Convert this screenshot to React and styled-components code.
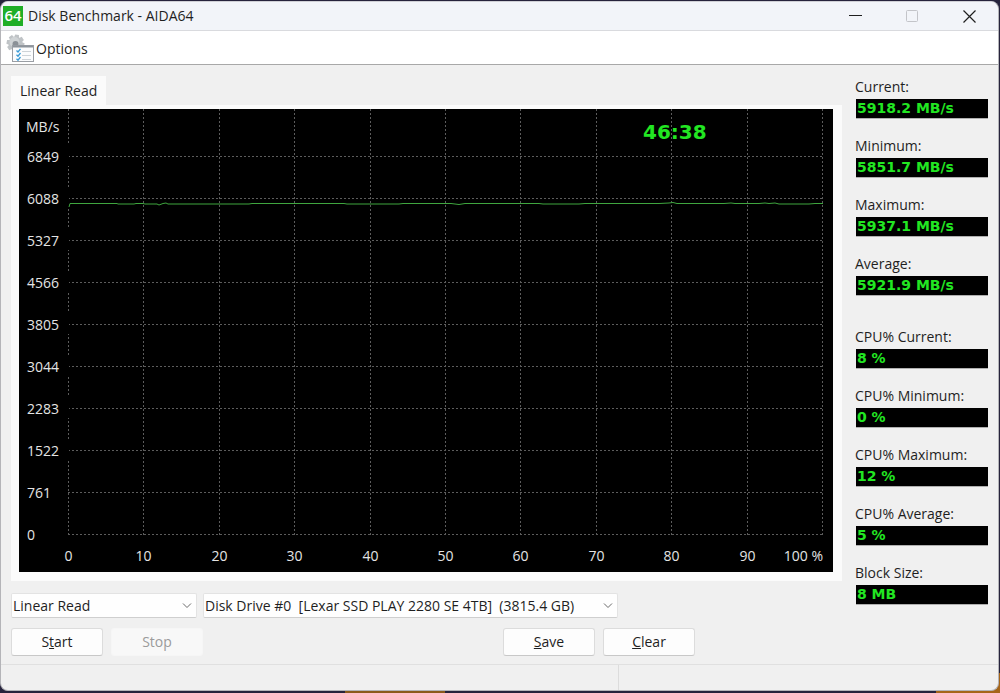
import React from 'react';
import styled, { createGlobalStyle } from 'styled-components';

const UI_FONT = `'Open Sans', 'Noto Sans', sans-serif`;
const VALUE_FONT = `'DejaVu Sans', sans-serif`;
const TEXT = '#1f1f1f';
const FACE = '#f0f0f0';
const GREEN = '#22e622';

const GlobalStyle = createGlobalStyle`
  * {
    box-sizing: border-box;
  }

  body {
    margin: 0;
    background: #26233c;
    font-family: ${UI_FONT};
    font-size: 14px;
    line-height: 20px;
    color: ${TEXT};
  }
`;

const Desktop = styled.div`
  min-height: 100vh;
  display: flex;
  padding: 1px 1px 2px 0;
  background:
    linear-gradient(#8a5a1c, #8a5a1c) 345px 100% / 100px 2px no-repeat,
    linear-gradient(#a5651a, #a5651a) 100% 100% / 64px 20px no-repeat,
    #26233c;
`;

const Window = styled.main`
  flex: 1;
  display: flex;
  flex-direction: column;
  background: ${FACE};
  border: 1px solid #b4b4b8;
  border-top-color: #d0d0d6;
  border-radius: 8px;
  overflow: hidden;
`;

const TitleBar = styled.header`
  height: 29px;
  display: flex;
  align-items: center;
  background: #f2f4f9;
  border-bottom: 1px solid #d9dade;
`;

const Logo = styled.svg`
  width: 20px;
  height: 20px;
  margin: 0 5px 0 2px;
  flex: none;
`;

const Title = styled.h1`
  flex: 1;
  margin: 0;
  font-size: 14px;
  font-weight: normal;
`;

const CaptionButton = styled.button`
  width: 57px;
  height: 28px;
  padding: 0;
  border: 0;
  display: flex;
  align-items: center;
  justify-content: center;
  background: transparent;
  color: ${TEXT};

  &:disabled {
    color: #c3c4c9;
  }
`;

const MenuBar = styled.nav`
  height: 34px;
  display: flex;
  align-items: center;
  padding: 2px 0 0 5px;
  background: #fff;
  border-bottom: 1px solid #a8a8a8;
`;

const MenuButton = styled.button`
  display: flex;
  align-items: center;
  gap: 1px;
  padding: 0;
  border: 0;
  background: transparent;
  font: inherit;
  color: inherit;
`;

const Body = styled.div`
  flex: 1;
  display: flex;
  gap: 13px;
  padding: 11px 10px 8px;
`;

const Left = styled.div`
  flex: 1;
  min-width: 0;
`;

const Tab = styled.button`
  display: block;
  height: 29px;
  padding: 0 9px;
  border: 0;
  background: #fbfbfb;
  font: inherit;
  color: inherit;
`;

const TabPanel = styled.section`
  padding: 4px 9px 9px 8px;
  background: #fbfbfb;
`;

const Chart = styled.svg`
  display: block;
  width: 100%;
  background: #000;
  font-family: ${UI_FONT};
  font-size: 14px;
  fill: #e4e4e4;
`;

const Clock = styled.text`
  font-family: ${VALUE_FONT};
  font-size: 20px;
  font-weight: bold;
  fill: ${GREEN};
`;

const Controls = styled.div`
  display: flex;
  gap: 6px;
  margin-top: ${p => p.$top}px;
`;

const SelectWrap = styled.div`
  position: relative;
  width: ${p => p.$width}px;

  svg {
    position: absolute;
    right: 5px;
    top: 9px;
    pointer-events: none;
  }
`;

const Select = styled.select`
  appearance: none;
  display: block;
  width: 100%;
  height: 25px;
  padding: 0 24px 0 1px;
  border: 1px solid #e3e3e3;
  border-bottom-color: #cfcfcf;
  border-radius: 2px;
  background: #fefefe;
  font: inherit;
  color: inherit;
`;

const PushButton = styled.button`
  width: 92px;
  height: 28px;
  padding: 0;
  border: 1px solid #dcdcdc;
  border-bottom-color: #c8c8c8;
  border-radius: 3px;
  background: #fdfdfd;
  font: inherit;
  color: inherit;

  &:disabled {
    border-color: #f6f6f6;
    background: #f8f8f8;
    color: #9b9b9b;
  }
`;

const ButtonPair = styled.div`
  display: flex;
  gap: 8px;
  margin-right: ${p => p.$right || 0}px;
`;

const Sidebar = styled.dl`
  width: 133px;
  margin: 0;
`;

const Stat = styled.div`
  height: 59px;
  margin-top: ${p => (p.$spaced ? 14 : 0)}px;
`;

const StatLabel = styled.dt`
  height: 23px;
  padding-top: 1px;
  white-space: nowrap;
`;

const StatValue = styled.dd`
  height: 20px;
  margin: 0 0 0 1px;
  padding-left: 1px;
  background: #000;
  border-bottom: 1px solid #b0b0b0;
  color: ${GREEN};
  font-family: ${VALUE_FONT};
  font-size: 14px;
  font-weight: bold;
  line-height: 18px;
`;

const StatusBar = styled.footer`
  display: flex;
  height: 26px;
  border-top: 1px solid #e0e0e0;
`;

const StatusCell = styled.div`
  flex: ${p => p.$grow};

  & + & {
    border-left: 1px solid #dcdcdc;
  }
`;

const STATS = [
  { label: 'Current:', value: '5918.2 MB/s' },
  { label: 'Minimum:', value: '5851.7 MB/s' },
  { label: 'Maximum:', value: '5937.1 MB/s' },
  { label: 'Average:', value: '5921.9 MB/s' },
  { label: 'CPU% Current:', value: '8 %', spaced: true },
  { label: 'CPU% Minimum:', value: '0 %' },
  { label: 'CPU% Maximum:', value: '12 %' },
  { label: 'CPU% Average:', value: '5 %' },
  { label: 'Block Size:', value: '8 MB' }
];

const Y_LABELS = [6849, 6088, 5327, 4566, 3805, 3044, 2283, 1522, 761, 0];
const X_LABELS = [0, 10, 20, 30, 40, 50, 60, 70, 80, 90];

const gridX = i => Math.round(49 + i * 75.4) + 0.5;
const gridY = i => 47.5 + i * 42;

const TRACE =
  'M50 98 L51 94.5 H98 L99 95 H115 L117 94.5 H124 L126 95 H138 L140 96 L144 94.5 L147 94 L149 95 H230 L233 94.5 H325 L328 95 H380 L384 94.5 H432 L440 95.5 L446 94.5 H520 L524 95 H560 L566 94.5 H640 L650 94 L654 93.5 L658 94.5 H705 L712 94 L716 94.5 H740 L746 94 L750 94.5 L756 94 L760 95 H790 L796 94.5 H804';

const Chevron = () => (
  <svg width="10" height="7" viewBox="0 0 10 7" fill="none" stroke="#6a6a6a">
    <path d="M1 1.5 5 5.5 9 1.5" />
  </svg>
);

const OptionsIcon = () => (
  <svg width="29" height="29" viewBox="0 0 29 29" aria-hidden="true">
    <g fill="#bfc3c6">
      <circle cx="9.5" cy="9.5" r="7" />
      {[0, 45, 90, 135, 180, 225, 270, 315].map(a => (
        <path
          key={a}
          d="M7 4 7.6 .6H11.4L12 4Z"
          transform={`rotate(${a + 10} 9.5 9.5)`}
        />
      ))}
    </g>
    <circle cx="8.5" cy="8" r="5" fill="#d0d4d6" />
    <circle cx="9.5" cy="10" r="3" fill="#8b9197" />
    <rect x="6.5" y="11.5" width="21" height="16" fill="#fbfcfd" stroke="#9a9ea4" />
    <path d="M7 12.5H27" stroke="#8d949b" strokeWidth="2" />
    <path
      d="M10.5 16.5 12 18 14.5 14.8M10.5 20.7 12 22.2 14.5 19M10.5 24.7 12 26.2 14.5 23"
      fill="none"
      stroke="#3b9bd6"
      strokeWidth="1.3"
    />
    <path d="M16 17.5H25M16 21.5H25M16 25.5H25" stroke="#cdd3d8" />
  </svg>
);

const BenchmarkChart = () => (
  <Chart viewBox="0 0 814 463" role="img" aria-label="Linear Read">
    <g stroke="#5c5c5c" strokeDasharray="2 2">
      {Array.from({ length: 11 }, (_, i) => (
        <path key={i} d={`M${gridX(i)} 0V426`} />
      ))}
      {Y_LABELS.map((label, i) => (
        <path key={label} d={`M49 ${gridY(i)}H804`} />
      ))}
    </g>
    {/* four digit labels blank out the axis behind them */}
    {Y_LABELS.map((label, i) =>
      label > 999 ? (
        <rect key={label} x="7" y={gridY(i) - 11.5} width="43" height="21" fill="#000" />
      ) : null
    )}
    <path d={TRACE} fill="none" stroke="#3fa63f" />
    <text x="7" y="23">
      MB/s
    </text>
    {Y_LABELS.map((label, i) => (
      <text key={label} x="8" y={gridY(i) + 5.5}>
        {label}
      </text>
    ))}
    {X_LABELS.map((label, i) => (
      <text key={label} x={gridX(i)} y="452" textAnchor="middle">
        {label}
      </text>
    ))}
    <text x="804" y="452" textAnchor="end">
      100 %
    </text>
    <Clock x="624" y="30">
      46:38
    </Clock>
  </Chart>
);

export default function App() {
  return (
    <>
      <GlobalStyle />
      <Desktop>
        <Window>
          <TitleBar>
            <Logo viewBox="0 0 20 20">
              <rect width="20" height="20" fill="#1fae27" />
              <text
                x="10"
                y="15"
                textAnchor="middle"
                fontFamily="Open Sans"
                fontSize="15"
                fontWeight="600"
                fill="#fff"
              >
                64
              </text>
            </Logo>
            <Title>Disk Benchmark - AIDA64</Title>
            <CaptionButton aria-label="Minimize">
              <svg width="13" height="13" stroke="currentColor">
                <path d="M0 5.5H13" />
              </svg>
            </CaptionButton>
            <CaptionButton aria-label="Maximize" disabled>
              <svg width="13" height="13" stroke="currentColor" fill="none">
                <rect x=".5" y=".5" width="11" height="11" rx="1" />
              </svg>
            </CaptionButton>
            <CaptionButton aria-label="Close">
              <svg width="13" height="13" stroke="currentColor" strokeWidth="1.2">
                <path d="M.5.5 12.5 12.5M12.5.5.5 12.5" />
              </svg>
            </CaptionButton>
          </TitleBar>

          <MenuBar>
            <MenuButton>
              <OptionsIcon />
              Options
            </MenuButton>
          </MenuBar>

          <Body>
            <Left>
              <Tab>Linear Read</Tab>
              <TabPanel>
                <BenchmarkChart />
              </TabPanel>
              <Controls $top={12}>
                <SelectWrap $width={186}>
                  <Select aria-label="Test">
                    <option>Linear Read</option>
                  </Select>
                  <Chevron />
                </SelectWrap>
                <SelectWrap $width={415}>
                  <Select aria-label="Drive">
                    <option>
                      {'Disk Drive #0\u00a0 [Lexar SSD PLAY 2280 SE 4TB]\u00a0 (3815.4 GB)'}
                    </option>
                  </Select>
                  <Chevron />
                </SelectWrap>
              </Controls>
              <Controls $top={10}>
                <ButtonPair $right={294}>
                  <PushButton>
                    S<u>t</u>art
                  </PushButton>
                  <PushButton disabled>Stop</PushButton>
                </ButtonPair>
                <ButtonPair>
                  <PushButton>
                    <u>S</u>ave
                  </PushButton>
                  <PushButton>
                    <u>C</u>lear
                  </PushButton>
                </ButtonPair>
              </Controls>
            </Left>

            <Sidebar>
              {STATS.map(({ label, value, spaced }) => (
                <Stat key={label} $spaced={spaced}>
                  <StatLabel>{label}</StatLabel>
                  <StatValue>{value}</StatValue>
                </Stat>
              ))}
            </Sidebar>
          </Body>

          <StatusBar>
            <StatusCell $grow={618} />
            <StatusCell $grow={379} />
          </StatusBar>
        </Window>
      </Desktop>
    </>
  );
}
